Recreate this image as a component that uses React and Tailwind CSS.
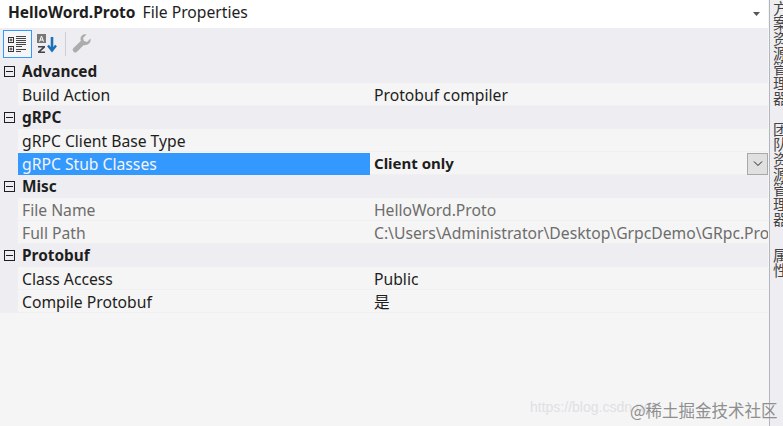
const font = { fontFamily: '"Noto Sans","Noto Sans CJK SC",sans-serif' };

function Minus() {
  return (
    <span className="w-[11px] h-[11px] border border-[#1e1e1e] flex items-center justify-center ml-1 mr-[7px] shrink-0">
      <span className="w-[7px] h-px bg-[#1e1e1e]" />
    </span>
  );
}

function Category({ name }) {
  return (
    <div className="h-[23px] flex items-center bg-[#eeeef2] text-[15.4px] font-bold text-[#1e1e1e]">
      <Minus />
      <span>{name}</span>
    </div>
  );
}

function Row({ name, value, gray, bold, selected }) {
  return (
    <div className="h-[23px] flex bg-[#eeeef2] text-[15.7px] relative">
      <div className="w-[18px] shrink-0" />
      <div className={`w-[352px] shrink-0 pl-1 flex items-center ${selected ? "bg-[#3399ff] border-t border-[#f5f5f5] text-[#f5f5f5] pt-[1px]" : "bg-[#f5f5f5] border-b border-[#f0f0f3] pt-[3px]"} ${gray ? "text-[#6d6d6d]" : selected ? "" : "text-[#1e1e1e]"}`}>
        {name}
      </div>
      <div className={`flex-1 min-w-0 pl-1 flex items-center overflow-hidden whitespace-nowrap bg-[#f5f5f5] border-b border-[#f0f0f3] ${gray ? "text-[#6d6d6d]" : "text-[#1e1e1e]"} ${bold ? "font-bold text-[15px]" : "pt-[3px]"}`}>
        {value}
      </div>
      {selected && (
        <div className="absolute right-0 top-[1px] w-[21px] h-[22px] bg-[#e0e0e0] border border-[#a8a8a8] flex items-center justify-center">
          <svg width="10" height="6" viewBox="0 0 10 6" fill="none" stroke="#222" strokeWidth="1"><path d="M1 .5 5 4.500 9 .5" /></svg>
        </div>
      )}
    </div>
  );
}

export default function App() {
  return (
    <div className="w-[783px] h-[426px] flex overflow-hidden bg-[#f5f5f5]" style={font}>
      <div className="w-[768px] shrink-0 flex flex-col relative">
        <div className="h-[28px] bg-white flex items-center pl-2 pr-[7px] pb-[2px] text-[15.7px] text-[#1e1e1e]">
          <span className="font-bold text-[15.5px]">HelloWord.Proto</span>
          <span className="ml-[7px]">File Properties</span>
          <svg className="ml-auto mt-[2px]" width="9" height="5" viewBox="0 0 9 5"><path d="M1 0h7L4.500 4z" fill="#555" /></svg>
        </div>
        <div className="h-[32px] bg-[#eeeef2] flex items-center pl-[3px] gap-[5px]">
          <div className="w-[29px] h-[28px] border border-[#3399ff] bg-[#f5f5f8] flex items-center justify-center">
            <svg width="19" height="18" viewBox="0 0 19 18">
              <rect x="0.500" y="2.500" width="5" height="5" fill="#fff" stroke="#333" />
              <path d="M1.500 5h3M3 3.500v3" stroke="#333" />
              <rect x="0.500" y="11.500" width="5" height="5" fill="#fff" stroke="#333" />
              <path d="M1.500 14h3M3 12.500v3" stroke="#333" />
              <path d="M8 1.500h10M8 3.500h10M8 5.500h10M8 7.500h10M8 9.500h10M8 11.500h6M8 14.500h10M8 16.500h5" stroke="#444" />
            </svg>
          </div>
          <svg width="21" height="20" viewBox="0 0 21 20" className="-ml-[1px]">
            <path d="M1 0h9v9H1z" fill="#777" />
            <path d="M3.500 7.500 5.500 2 7.500 7.500M4.200 6h2.600" stroke="#fff" fill="none" />
            <path d="M2 12h7v1.500L4.500 17.500H9V19H2v-1.500L6.500 13.500H2z" fill="#444" />
            <path d="M16 3v13" stroke="#1a6fb8" strokeWidth="2.600" />
            <path d="M12 11.500l4 5 4-5" stroke="#1a6fb8" strokeWidth="2.400" fill="none" />
          </svg>
          <div className="w-px h-[24px] bg-[#ccced6] ml-[3px]" />
          <svg width="20" height="20" viewBox="0 0 20 20" className="ml-[1px]">
            <path d="M18.500 4.500 15 8l-3-1-1-3 3.500-3.500c-2.800-.8-6 1.200-6 4.500 0 .8.100 1.300.300 1.900L1.500 14a2.500 2.500 0 0 0 3.800 3.500l6.500-6.600c.7.200 1.300.300 2 .2 3.200-.2 5.500-3.200 4.700-6.600z" fill="#acacac" />
          </svg>
        </div>
        <Category name="Advanced" />
        <Row name="Build Action" value="Protobuf compiler" />
        <Category name="gRPC" />
        <Row name="gRPC Client Base Type" value="" />
        <Row name="gRPC Stub Classes" value="Client only" bold selected />
        <Category name="Misc" />
        <Row name="File Name" value="HelloWord.Proto" gray />
        <Row name="Full Path" value="C:\Users\Administrator\Desktop\GrpcDemo\GRpc.Proto\HelloWord.Proto" gray />
        <Category name="Protobuf" />
        <Row name="Class Access" value="Public" />
        <Row name="Compile Protobuf" value="是" />
        <div className="flex-1 bg-[#f5f5f5]" />
        <div className="absolute left-[530px] top-[397px] text-[14px] text-[#e0e0e4] whitespace-nowrap" style={{ fontFamily: '"Liberation Sans",sans-serif' }}>https://blog.csdn.net</div>
        <div className="absolute left-[630px] top-[398px] text-[16.500px] leading-[24px] text-[#8f8f8f] whitespace-nowrap" style={{ fontFamily: '"Noto Sans CJK SC",sans-serif' }}>@稀土掘金技术社区</div>
      </div>
      <div className="w-px bg-[#b4b4bc] shrink-0 ml-[1px]" />
      <div className="flex-1 flex flex-col bg-[#eeeef2] overflow-hidden pl-[2px] text-[15px] leading-[16px] text-[#444]" style={{ fontFamily: '"Noto Sans CJK SC",sans-serif' }}>
        <div className="w-[16px] whitespace-nowrap mt-[1px]" style={{ writingMode: "vertical-rl" }}>方案资源管理器</div>
        <div className="w-[16px] whitespace-nowrap mt-[16px]" style={{ writingMode: "vertical-rl" }}>团队资源管理器</div>
        <div className="w-[16px] whitespace-nowrap mt-[21px]" style={{ writingMode: "vertical-rl" }}>属性</div>
      </div>
    </div>
  );
}
